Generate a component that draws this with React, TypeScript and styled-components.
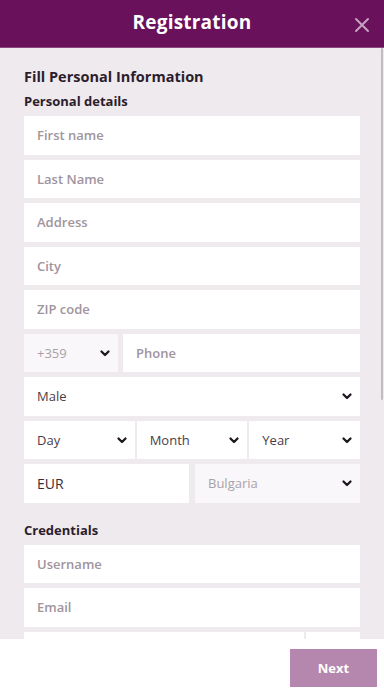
import React from "react";
import styled, { createGlobalStyle } from "styled-components";

const Global = createGlobalStyle`
  html, body { margin: 0; padding: 0; }
  body { font-family: "Open Sans", "Noto Sans", "DejaVu Sans", sans-serif; background: #ffffff; }
  * { box-sizing: border-box; }
`;

const Shell = styled.div`
  width: 384px;
  height: 691px;
  display: flex;
  flex-direction: column;
  overflow: hidden;
`;

const Header = styled.header`
  height: 48px;
  flex: none;
  background: #69115a;
  border-bottom: 1px solid #8a4a80;
  display: flex;
  align-items: center;
  justify-content: center;
  position: relative;
`;

const Title = styled.h1`
  margin: 0;
  color: #ffffff;
  font-size: 19px;
  font-weight: 700;
  letter-spacing: 0.2px;
  line-height: 1;
  padding-bottom: 2px;
`;

const Close = styled.button`
  position: absolute;
  right: 14px;
  top: 17px;
  width: 16px;
  height: 16px;
  padding: 0;
  border: none;
  background: none;
  display: flex;
`;

const BodyWrap = styled.div`
  flex: 1;
  min-height: 0;
  position: relative;
  display: flex;
`;

const Body = styled.main`
  flex: 1;
  min-height: 0;
  overflow-y: auto;
  background: #efeaee;
  padding: 18px 24px 24px 24px;
  scrollbar-width: none;
  &::-webkit-scrollbar { display: none; }
`;

const ScrollThumb = styled.div`
  position: absolute;
  right: 1px;
  top: 0;
  width: 2px;
  height: 352px;
  background: #c2bcc1;
  border-radius: 1px;
`;

const SectionTitle = styled.h2`
  margin: 0 0 4px 0;
  font-size: 14.5px;
  font-weight: 700;
  color: #2b1d2c;
  line-height: 22px;
`;

const GroupTitle = styled.h3<{ $top?: number }>`
  margin: ${(p) => p.$top ?? 0}px 0 6px 0;
  font-size: 13px;
  font-weight: 700;
  color: #2b1d2c;
  line-height: 18px;
`;

const Stack = styled.div`
  display: flex;
  flex-direction: column;
  gap: 5px;
`;

const Row = styled.div<{ $cols: string; $gap: number }>`
  display: grid;
  grid-template-columns: ${(p) => p.$cols};
  gap: ${(p) => p.$gap}px;
`;

const Field = styled.input`
  height: 38.5px;
  width: 100%;
  border: none;
  outline: none;
  background: #ffffff;
  padding: 0 13px;
  font-family: inherit;
  font-size: 13px;
  font-weight: 600;
  color: #3a2b38;
  &::placeholder { color: #a0949d; }
`;

const SelectBox = styled.div<{ $muted?: boolean }>`
  height: 38.5px;
  background: ${(p) => (p.$muted ? "#f9f7f9" : "#ffffff")};
  padding: 0 6px 0 13px;
  display: flex;
  align-items: center;
  justify-content: space-between;
  font-size: 13px;
  font-weight: 400;
  color: ${(p) => (p.$muted ? "#aaa1a8" : "#4a3d48")};
`;

const ValueBox = styled.div`
  height: 38.5px;
  background: #ffffff;
  padding: 0 13px;
  display: flex;
  align-items: center;
  font-size: 14px;
  color: #3a2b38;
`;

const Footer = styled.footer`
  height: 52px;
  flex: none;
  background: #ffffff;
  display: flex;
  align-items: center;
  justify-content: flex-end;
  padding: 0 7px 0 0;
`;

const NextButton = styled.button`
  width: 87px;
  height: 38px;
  border: none;
  background: #b586ae;
  color: #ffffff;
  font-family: inherit;
  font-size: 13px;
  font-weight: 700;
  margin-top: 5px;
`;

const Chevron = () => (
  <svg width="14" height="14" viewBox="0 0 14 14">
    <path d="M3.5 5.5 L7 9 L10.5 5.5" fill="none" stroke="#1f1620" strokeWidth="2.3" strokeLinecap="round" strokeLinejoin="round" />
  </svg>
);

const Select = ({ label, muted }: { label: string; muted?: boolean }) => (
  <SelectBox $muted={muted}>
    <span>{label}</span>
    <Chevron />
  </SelectBox>
);

export default function App() {
  return (
    <Shell>
      <Global />
      <Header>
        <Title>Registration</Title>
        <Close aria-label="Close">
          <svg width="16" height="16" viewBox="0 0 16 16">
            <path d="M2 2 L14 14 M14 2 L2 14" stroke="#c7a2c1" strokeWidth="2" strokeLinecap="round" />
          </svg>
        </Close>
      </Header>
      <BodyWrap>
        <Body>
          <SectionTitle>Fill Personal Information</SectionTitle>
          <GroupTitle>Personal details</GroupTitle>
          <Stack>
            <Field placeholder="First name" />
            <Field placeholder="Last Name" />
            <Field placeholder="Address" />
            <Field placeholder="City" />
            <Field placeholder="ZIP code" />
            <Row $cols="94px 1fr" $gap={5}>
              <Select label="+359" muted />
              <Field placeholder="Phone" />
            </Row>
            <Select label="Male" />
            <Row $cols="1fr 1fr 1fr" $gap={2}>
              <Select label="Day" />
              <Select label="Month" />
              <Select label="Year" />
            </Row>
            <Row $cols="165px 1fr" $gap={6}>
              <ValueBox>EUR</ValueBox>
              <Select label="Bulgaria" muted />
            </Row>
          </Stack>
          <GroupTitle $top={18}>Credentials</GroupTitle>
          <Stack>
            <Field placeholder="Username" />
            <Field placeholder="Email" />
            <Row $cols="1fr 54px" $gap={2}>
              <Field placeholder="Password" type="password" />
              <ValueBox />
            </Row>
            <Row $cols="1fr 54px" $gap={2}>
              <Field placeholder="Confirm password" type="password" />
              <ValueBox />
            </Row>
            <Field placeholder="Promo code" />
          </Stack>
        </Body>
        <ScrollThumb />
      </BodyWrap>
      <Footer>
        <NextButton>Next</NextButton>
      </Footer>
    </Shell>
  );
}
